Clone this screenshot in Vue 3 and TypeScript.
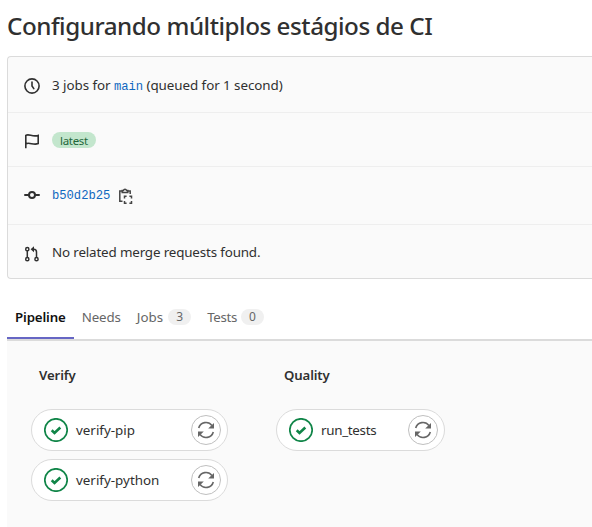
<script setup lang="ts">
interface Tab { label: string; kind: string; count?: number }
interface Stage { name: string; kind: string; jobs: string[] }

const tabs: Tab[] = [
  { label: 'Pipeline', kind: 'active' },
  { label: 'Needs', kind: 'needs' },
  { label: 'Jobs', kind: 'jobs', count: 3 },
  { label: 'Tests', kind: 'tests', count: 0 },
]
const stages: Stage[] = [
  { name: 'Verify', kind: 'verify', jobs: ['verify-pip', 'verify-python'] },
  { name: 'Quality', kind: 'quality', jobs: ['run_tests'] },
]
</script>

<template>
  <main class="page">
    <h1>Configurando múltiplos estágios de CI</h1>

    <section class="info">
      <div class="row r1">
        <svg class="icon" viewBox="0 0 16 16"><circle cx="8" cy="8" r="7.1" /><path d="M8 4v4l1.8 2.6" stroke-linecap="round" /></svg>
        <span class="summary">3 jobs for <a class="mono">main</a> (queued for <span class="wait">1</span> second)</span>
      </div>
      <div class="row r2">
        <svg class="icon flag" viewBox="0 0 16 16"><path d="M1.8 15.2V2.4C5 .4 8.5 4.4 14.2 2.4v8.2C9.5 12.6 5.5 8.8 1.8 10.8" /></svg>
        <span class="badge">latest</span>
      </div>
      <div class="row r3">
        <svg class="icon heavy" viewBox="0 0 16 16"><circle cx="8" cy="8" r="3" /><path d="M1 8h4M11 8h4" stroke-linecap="round" /></svg>
        <a class="mono">b50d2b25</a>
        <svg class="icon copy" viewBox="0 0 16 16"><path d="M5 3H2.8v10.2h2.7M11 3h2.2v3" /><path d="M5.2 4.4V2.5h1.2a1.7 1.7 0 0 1 3.2 0h1.2v1.9z" /><path d="M7.5 10.4V8.3h2.1M12.4 8.3h2.1v2.1M14.5 13.1v2.1h-2.1M9.6 15.2H7.5v-2.1" /></svg>
      </div>
      <div class="row r4">
        <svg class="icon merge" viewBox="0 0 16 16"><circle cx="3.3" cy="3.2" r="1.6" /><circle cx="3.3" cy="13.2" r="1.6" /><circle cx="12.5" cy="13.2" r="1.6" /><path d="M3.3 5v6.5M12.5 11.5V6q0-2.8-2.7-2.8H9" /><path class="solid" d="M6.6 3.2 10 .2v6z" /></svg>
        <span class="related">No related merge requests found.</span>
      </div>
    </section>

    <nav>
      <a v-for="tab in tabs" :key="tab.label" class="tab" :class="tab.kind">
        <span>{{ tab.label }}</span>
        <span v-if="tab.count !== undefined" class="count">{{ tab.count }}</span>
      </a>
    </nav>

    <section class="graph">
      <div v-for="stage in stages" :key="stage.name" class="stage" :class="stage.kind">
        <h2>{{ stage.name }}</h2>
        <div v-for="job in stage.jobs" :key="job" class="job">
          <svg class="status" viewBox="0 0 24 24"><circle cx="12" cy="12" r="11.2" /><path d="m7.7 12.3 2.8 2.7 5.8-5.5" /></svg>
          <span class="job-name">{{ job }}</span>
          <button type="button" :aria-label="job">
            <svg viewBox="0 0 18 18"><path d="M1.7 7A7.5 7.5 0 0 1 15 4.6M16.3 11A7.5 7.5 0 0 1 3 13.4" /><path class="solid" d="M17 1.9v5.6h-5.8zM1 16.1v-5.6h5.8z" /></svg>
          </button>
        </div>
      </div>
    </section>
  </main>
</template>

<style>
body { margin: 0; background: #fff; overflow: hidden; }
</style>
<style scoped>
* { box-sizing: border-box; }
.page { height: 527px; padding-left: 7px; overflow: hidden; display: flex; flex-direction: column; color: #303030; font: 13.4px/20px "Noto Sans", "Open Sans", sans-serif; white-space: nowrap; }
h1 { margin: 0; height: 56px; padding-top: 10px; font-size: 24.2px; line-height: 32px; font-weight: 500; letter-spacing: -.46px; flex: none; }
.info { height: 223px; flex: none; border: 1px solid #dbdbdb; border-right: 0; border-radius: 4px 0 0 4px; background: #fafafa; }
.row { display: flex; align-items: center; padding-left: 16px; border-bottom: 1px solid #eee; }
.r1 { height: 56px; padding-top: 2px; }
.r2 { height: 54px; }
.r3 { height: 58px; }
.r4 { height: 53px; border: 0; }
.icon { width: 16px; height: 16px; margin-right: 12px; flex: none; fill: none; stroke: #303030; stroke-width: 1.6; }
.flag { margin-top: 3px; }
.heavy { stroke-width: 2; margin-top: -1px; }
.copy { margin: 0 0 0 7px; stroke: #444; stroke-width: 1.5; }
.merge { margin-top: 4px; stroke-width: 1.5; }
.solid { fill: currentColor; stroke: none; }
.summary { letter-spacing: -.06px; }
.wait { color: #303030; }
.related { letter-spacing: -.16px; }
.mono { color: #1068bf; font-family: "Liberation Mono", monospace; font-size: 12.2px; letter-spacing: -.03px; }
.badge { height: 16px; padding: 0 8px; border-radius: 8px; background: #c3e6cd; color: #24663b; font-size: 11.5px; line-height: 17px; letter-spacing: -.3px; }
nav { height: 62px; flex: none; display: flex; align-items: flex-end; border-bottom: 2px solid #dbdbdb; }
.tab { height: 44px; padding: 13px 8px 0; display: flex; color: #666; font-size: 13.3px; line-height: 18px; letter-spacing: -.14px; }
.active { color: #111; font-weight: 600; border-bottom: 2px solid #6666c4; }
.jobs { letter-spacing: .1px; }
.tests { letter-spacing: -.35px; }
.count { height: 16px; margin: 1px 0 0 4px; padding: 0 8px; border-radius: 8px; background: #f0f0f0; font-size: 12px; line-height: 16px; letter-spacing: 0; }
.jobs .count { margin-left: 5px; }
.graph { flex: 1; display: flex; align-items: flex-start; padding: 24px; gap: 48px; background: #fafafa; }
.stage { width: 197px; }
.quality { width: 169px; }
h2 { margin: 0 0 24px 8px; font-size: 13.2px; line-height: 20px; font-weight: 600; letter-spacing: -.12px; }
.job { height: 42px; margin-bottom: 8px; padding: 0 6px 0 12px; display: flex; align-items: center; border: 1px solid #dbdbdb; border-radius: 21px; background: #fff; }
.status { width: 24px; height: 24px; margin-right: 8px; fill: none; stroke: #108548; stroke-width: 1.7; }
.status path { stroke-width: 2.6; }
.job-name { flex: 1; }
.quality .job-name { letter-spacing: -.3px; }
button { width: 30px; height: 30px; padding: 0; display: grid; place-items: center; border: 1px solid #bfbfbf; border-radius: 50%; background: #fff; color: #666; }
button svg { width: 18px; height: 18px; fill: none; stroke: #666; stroke-width: 1.6; }
</style>
